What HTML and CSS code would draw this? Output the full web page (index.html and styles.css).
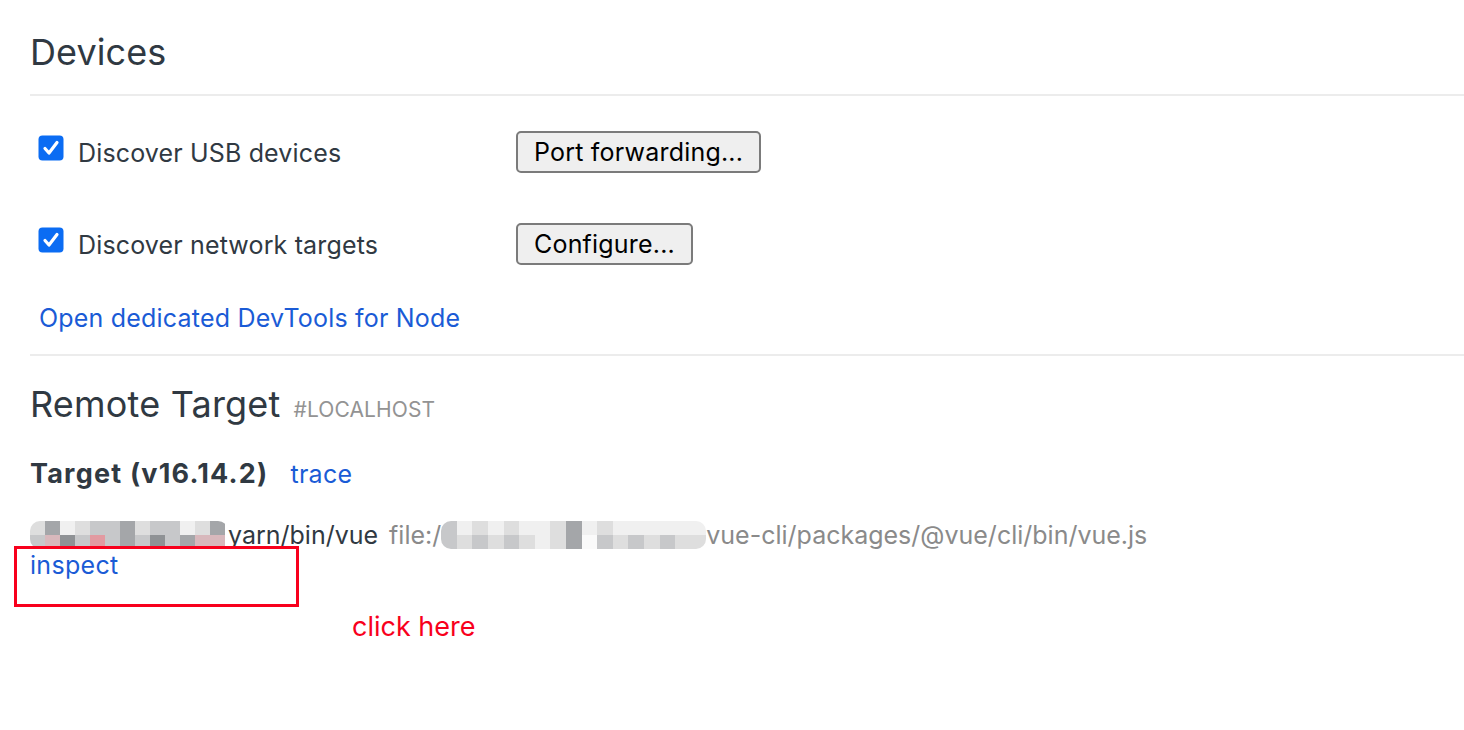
FILE: index.html
```html
<!DOCTYPE html>
<html>
<head>
<meta charset="utf-8">
<link rel="stylesheet" href="styles.css">
</head>
<body>
<main class="page">
  <section class="devices">
    <h1 class="title">Devices</h1>
    <div class="rule"></div>
    <div class="opt-row row-usb">
      <label class="opt-label">
        <span class="check"><svg viewBox="0 0 26 26" width="26" height="26"><rect x="0.5" y="0.5" width="25" height="25" rx="4" fill="#0b6cf3"/><path d="M7 13.5 L11 18 L19 7.5" fill="none" stroke="#fff" stroke-width="3.2" stroke-linecap="round" stroke-linejoin="round"/></svg></span>
        <span class="opt-text">Discover USB devices</span>
      </label>
      <button class="btn">Port forwarding...</button>
    </div>
    <div class="opt-row row-net">
      <label class="opt-label">
        <span class="check"><svg viewBox="0 0 26 26" width="26" height="26"><rect x="0.5" y="0.5" width="25" height="25" rx="4" fill="#0b6cf3"/><path d="M7 13.5 L11 18 L19 7.5" fill="none" stroke="#fff" stroke-width="3.2" stroke-linecap="round" stroke-linejoin="round"/></svg></span>
        <span class="opt-text">Discover network targets</span>
      </label>
      <button class="btn">Configure...</button>
    </div>
    <a class="link node-link">Open dedicated DevTools for Node</a>
    <div class="rule rule2"></div>
  </section>
  <section class="remote">
    <h2 class="title2">Remote Target <span class="host">#LOCALHOST</span></h2>
    <div class="target-head"><span class="target-name">Target (v16.14.2)</span><a class="link trace">trace</a></div>
    <div class="path-row">
      <span class="mosaic m1">
        <span class="cell s2"></span><span class="cell s4"></span><span class="cell s1"></span><span class="cell s2"></span><span class="cell s3"></span><span class="cell s3"></span><span class="cell s4"></span><span class="cell s2"></span><span class="cell s3"></span><span class="cell s3"></span><span class="cell s1"></span><span class="cell s2"></span><span class="cell s4"></span>
        <span class="cell s3"></span><span class="cell p1"></span><span class="cell s5"></span><span class="cell s3"></span><span class="cell p2"></span><span class="cell s3"></span><span class="cell s4"></span><span class="cell s3"></span><span class="cell s5"></span><span class="cell s3"></span><span class="cell s4"></span><span class="cell p1"></span><span class="cell p1"></span>
      </span><span class="path-main">yarn/bin/vue</span>
      <span class="path-file">file:/</span><span class="mosaic m2">
        <span class="cell s3"></span><span class="cell s1"></span><span class="cell s2"></span><span class="cell s1"></span><span class="cell s2"></span><span class="cell s1"></span><span class="cell s1"></span><span class="cell s2"></span><span class="cell s4"></span><span class="cell s1"></span><span class="cell s2"></span><span class="cell s1"></span><span class="cell s1"></span><span class="cell s1"></span><span class="cell s1"></span><span class="cell s1"></span><span class="cell s1"></span>
        <span class="cell s3"></span><span class="cell s2"></span><span class="cell s3"></span><span class="cell s2"></span><span class="cell s3"></span><span class="cell s2"></span><span class="cell s1"></span><span class="cell s2"></span><span class="cell s4"></span><span class="cell s0"></span><span class="cell s3"></span><span class="cell s2"></span><span class="cell s3"></span><span class="cell s2"></span><span class="cell s3"></span><span class="cell s2"></span><span class="cell s2"></span>
      </span><span class="path-file">vue-cli/packages/@vue/cli/bin/vue.js</span>
    </div>
    <a class="link inspect">inspect</a>
  </section>
  <div class="annot-box"></div>
  <div class="annot-text">click here</div>
</main>
</body>
</html>
```
FILE: styles.css
```css
html, body {
  margin: 0;
  padding: 0;
  background: #fff;
}
body {
  font-family: Inter, "Liberation Sans", sans-serif;
  color: #303942;
  width: 1464px;
  height: 730px;
  overflow: hidden;
}
.page {
  position: relative;
  padding-left: 30px;
  height: 730px;
  box-sizing: border-box;
}
.devices {
  display: flex;
  flex-direction: column;
  align-items: flex-start;
}
.title {
  margin: 30px 0 0 0;
  font-size: 36px;
  letter-spacing: 0.1px;
  line-height: 44px;
  font-weight: 400;
}
.rule {
  align-self: stretch;
  height: 2px;
  background: #ececec;
  margin-top: 20px;
}
.opt-row {
  display: flex;
  align-items: center;
  height: 42px;
}
.row-usb { margin-top: 35px; }
.row-net { margin-top: 50px; }
.opt-label {
  display: flex;
  align-items: center;
  width: 486px;
}
.check {
  display: flex;
  margin-left: 8px;
  margin-right: 14px;
  margin-top: -8px;
}
.opt-text {
  font-size: 25px;
  letter-spacing: 0.15px;
  line-height: 30px;
  margin-top: 2px;
}
.btn {
  height: 42px;
  box-sizing: border-box;
  border: 2px solid #7b7b7b;
  border-radius: 5px;
  background: #efefef;
  color: #000;
  font-family: Inter, "Liberation Sans", sans-serif;
  font-size: 25px;
  letter-spacing: 0.2px;
  padding: 0 16px;
  line-height: 36px;
}
.link {
  color: #1a5bd6;
  cursor: pointer;
}
.node-link {
  margin-top: 38px;
  margin-left: 9px;
  font-size: 25px;
  letter-spacing: 0.2px;
  line-height: 30px;
}
.rule2 { margin-top: 21px; }
.title2 {
  margin: 26px 0 0 0;
  height: 44px;
  display: flex;
  align-items: baseline;
  font-size: 36px;
  letter-spacing: 0.2px;
  line-height: 44px;
  font-weight: 400;
}
.host {
  font-size: 21px;
  letter-spacing: 0.1px;
  color: #939393;
  margin-left: 13px;
}
.target-head {
  margin-top: 33px;
  height: 30px;
  line-height: 30px;
  display: flex;
  align-items: baseline;
}
.target-name {
  font-size: 27px;
  letter-spacing: 1.2px;
  font-weight: 700;
}
.trace {
  font-size: 25px;
  letter-spacing: 0.3px;
  margin-left: 22px;
}
.path-row {
  margin-top: 31px;
  height: 30px;
  display: flex;
  align-items: center;
  font-size: 25px;
  white-space: nowrap;
}
.mosaic {
  display: grid;
  grid-template-rows: 14px 14px;
  grid-auto-flow: row;
  border-radius: 10px;
  overflow: hidden;
  filter: blur(0.6px);
}
.m1 {
  grid-template-columns: repeat(13, 15px);
  width: 198px;
}
.m2 {
  grid-template-columns: repeat(17, 15.6px);
  width: 265px;
}
.cell.s0 { background: #fafafa; }
.cell.s1 { background: #f0f0f0; }
.cell.s2 { background: #dedede; }
.cell.s3 { background: #c7c8ca; }
.cell.s4 { background: #a4a6a9; }
.cell.s5 { background: #8f9295; }
.cell.p1 { background: #d8b8bc; }
.cell.p2 { background: #e29aa1; }
.path-main {
  color: #303942;
  margin-right: 11px;
}
.path-file {
  color: #8a8a8a;
}
.inspect {
  display: block;
  font-size: 25px;
  letter-spacing: 0.3px;
  line-height: 30px;
}
.annot-box {
  position: absolute;
  left: 14px;
  top: 546px;
  width: 285px;
  height: 61px;
  box-sizing: border-box;
  border: 3px solid #f8001c;
}
.annot-text {
  position: absolute;
  left: 352px;
  top: 611px;
  font-size: 27px;
  line-height: 32px;
  color: #f8001c;
}
```
